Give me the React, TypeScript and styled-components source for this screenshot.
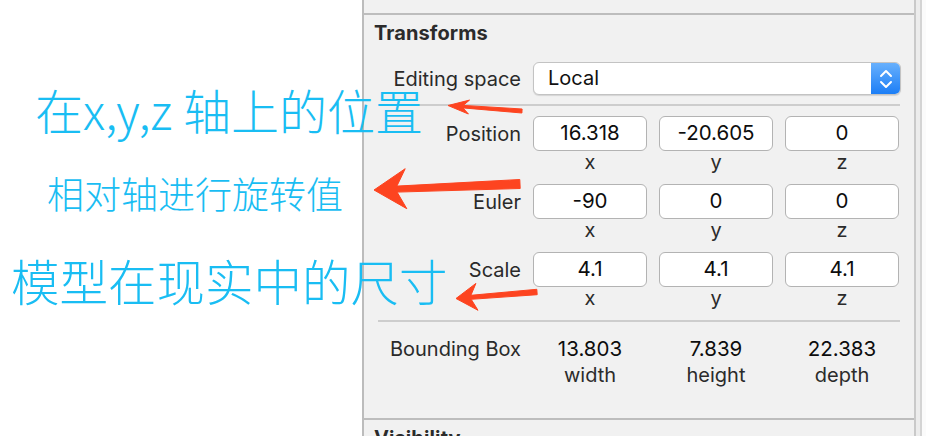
import styled, { createGlobalStyle } from 'styled-components';

const GlobalStyle = createGlobalStyle`
  html, body { margin: 0; padding: 0; background: #ffffff; }
  body { font-family: Inter, "Liberation Sans", sans-serif; }
`;

const ACCENT = '#19bdf3';
const ARROW = '#fd4420';

type Vec = { label: string; values: [string, string, string] };

const vectors: Vec[] = [
  { label: 'Position', values: ['16.318', '-20.605', '0'] },
  { label: 'Euler', values: ['-90', '0', '0'] },
  { label: 'Scale', values: ['4.1', '4.1', '4.1'] },
];

const axes = ['x', 'y', 'z'];

const bounds = [
  { value: '13.803', name: 'width' },
  { value: '7.839', name: 'height' },
  { value: '22.383', name: 'depth' },
];

// tapered, swept-back arrow like a screenshot markup tool draws
function arrowPoints(
  x1: number, y1: number, x2: number, y2: number,
  wt: number, wn: number, hl: number, hw: number,
) {
  const dx = x2 - x1;
  const dy = y2 - y1;
  const len = Math.hypot(dx, dy);
  const ux = dx / len, uy = dy / len;
  const nx = -uy, ny = ux;
  const bx = x2 - ux * hl, by = y2 - uy * hl;
  const kx = x2 - ux * hl * 0.72, ky = y2 - uy * hl * 0.72;
  const pts = [
    [x2, y2],
    [bx + nx * hw / 2, by + ny * hw / 2],
    [kx + nx * wn / 2, ky + ny * wn / 2],
    [x1 + nx * wt / 2, y1 + ny * wt / 2],
    [x1 - nx * wt / 2, y1 - ny * wt / 2],
    [kx - nx * wn / 2, ky - ny * wn / 2],
    [bx - nx * hw / 2, by - ny * hw / 2],
  ];
  return pts.map(p => p.map(v => v.toFixed(1)).join(',')).join(' ');
}

export default function App() {
  return (
    <>
      <GlobalStyle />
      <Page>
        <Gutter />
        <Panel>
          <TopStub />
          <Section>
            <SectionTitle>Transforms</SectionTitle>

            <FieldGrid $top={17}>
              <RowLabel>Editing space</RowLabel>
              <Popup>
                <PopupText>Local</PopupText>
                <Stepper>
                  <svg width="14" height="22" viewBox="0 0 14 22" fill="none">
                    <path d="M2 8 L7 3 L12 8" stroke="#fff" strokeWidth="2" strokeLinecap="round" strokeLinejoin="round" />
                    <path d="M2 14 L7 19 L12 14" stroke="#fff" strokeWidth="2" strokeLinecap="round" strokeLinejoin="round" />
                  </svg>
                </Stepper>
              </Popup>
            </FieldGrid>

            <Separator $top={9} />

            <VectorList>
              {vectors.map(v => (
                <FieldGrid key={v.label} $top={0}>
                  <RowLabel>{v.label}</RowLabel>
                  {v.values.map((val, i) => (
                    <NumBox key={i}>{val}</NumBox>
                  ))}
                  <span />
                  {axes.map(a => (
                    <AxisLabel key={a}>{a}</AxisLabel>
                  ))}
                </FieldGrid>
              ))}
            </VectorList>

            <Separator $top={11} />

            <FieldGrid $top={14}>
              <RowLabel>Bounding Box</RowLabel>
              {bounds.map(b => (
                <BoundValue key={b.name}>{b.value}</BoundValue>
              ))}
              <span />
              {bounds.map(b => (
                <BoundName key={b.name}>{b.name}</BoundName>
              ))}
            </FieldGrid>
          </Section>
          <Section $last>
            <SectionTitle>Visibility</SectionTitle>
          </Section>
        </Panel>
        <RightEdge />

        <Overlay>
          <Note style={{ left: 35, top: 85, fontSize: 48 }}>在x,y,z 轴上的位置</Note>
          <Note style={{ left: 47, top: 175, fontSize: 37 }}>相对轴进行旋转值</Note>
          <Note style={{ left: 11, top: 256, fontSize: 48.5 }}>模型在现实中的尺寸</Note>
          <Arrows width="926" height="436" viewBox="0 0 926 436">
            <polygon points={arrowPoints(522, 111, 448, 105.5, 4, 2.5, 21, 14)} />
            <polygon points={arrowPoints(520, 184, 374, 190, 9, 6, 32, 40)} />
            <polygon points={arrowPoints(537, 292, 456, 298.5, 5.5, 4, 21, 27)} />
          </Arrows>
        </Overlay>
      </Page>
    </>
  );
}

/* ── Styled components ───────────────────────────────────── */

const Page = styled.div`
  position: relative;
  display: flex;
  width: 926px;
  height: 436px;
  overflow: hidden;
  background: #ffffff;
`;

const Gutter = styled.div`
  width: 362px;
  flex-shrink: 0;
`;

const Panel = styled.div`
  width: 554px;
  flex-shrink: 0;
  box-sizing: border-box;
  background: #f1f1f1;
  border-left: 2px solid #bcbcbc;
  border-right: 2px solid #c9c9c9;
  display: flex;
  flex-direction: column;
`;

const RightEdge = styled.div`
  flex: 1;
  background: linear-gradient(to right, #ececec 0 4px, #d4d4d4 4px 6px, #fbfbfb 6px);
`;

const TopStub = styled.div`
  height: 13px;
  flex-shrink: 0;
  border-bottom: 2px solid #bdbdbd;
`;

const Section = styled.section<{ $last?: boolean }>`
  padding: 6px 14px ${({ $last }) => ($last ? '0' : '30px')} 10px;
  border-bottom: ${({ $last }) => ($last ? 'none' : '2px solid #bdbdbd')};
  flex-shrink: 0;
`;

const SectionTitle = styled.h2`
  margin: 0;
  font-size: 20px;
  line-height: 24px;
  font-weight: 700;
  color: #2b2b2b;
  letter-spacing: 0.1px;
`;

const FieldGrid = styled.div<{ $top: number }>`
  display: grid;
  grid-template-columns: 147px repeat(3, 114px);
  column-gap: 12px;
  align-items: center;
  margin-top: ${({ $top }) => $top}px;
`;

const RowLabel = styled.div`
  font-size: 20px;
  line-height: 24px;
  color: #2a2a2a;
  text-align: right;
  white-space: nowrap;
`;

const Popup = styled.div`
  grid-column: 2 / span 3;
  height: 33px;
  margin-right: -2px;
  display: flex;
  align-items: stretch;
  box-sizing: border-box;
  background: #ffffff;
  border: 1px solid #c3c3c3;
  border-radius: 6px;
  box-shadow: 0 1px 1px rgba(0, 0, 0, 0.12);
  overflow: hidden;
`;

const PopupText = styled.span`
  flex: 1;
  padding-left: 14px;
  font-size: 20px;
  line-height: 31px;
  color: #111;
`;

const Stepper = styled.span`
  width: 29px;
  display: flex;
  align-items: center;
  justify-content: center;
  background: linear-gradient(to bottom, #67b0fd, #1c7ef6);
`;

const Separator = styled.hr<{ $top: number }>`
  margin: ${({ $top }) => $top}px 0 0 4px;
  height: 2px;
  border: none;
  background: #cdcdcd;
`;

const VectorList = styled.div`
  display: flex;
  flex-direction: column;
  gap: 11px;
  margin-top: 10px;
`;

const NumBox = styled.div`
  height: 35px;
  box-sizing: border-box;
  background: #ffffff;
  border: 1.5px solid #b3b3b3;
  border-radius: 6px;
  font-size: 20.5px;
  line-height: 32px;
  text-align: center;
  color: #0d0d0d;
`;

const AxisLabel = styled.div`
  font-size: 20px;
  line-height: 22px;
  text-align: center;
  color: #2b2b2b;
`;

const BoundValue = styled.div`
  font-size: 20.5px;
  line-height: 26px;
  text-align: center;
  color: #0d0d0d;
`;

const BoundName = styled.div`
  font-size: 20px;
  line-height: 26px;
  text-align: center;
  color: #2b2b2b;
`;

const Overlay = styled.div`
  position: absolute;
  inset: 0;
  pointer-events: none;
`;

const Note = styled.div`
  position: absolute;
  line-height: 1;
  white-space: nowrap;
  color: ${ACCENT};
  font-family: "Noto Sans CJK SC", "Noto Sans", sans-serif;
  font-weight: 300;
`;

const Arrows = styled.svg`
  position: absolute;
  left: 0;
  top: 0;
  fill: ${ARROW};
  stroke: ${ARROW};
  stroke-width: 1;
  stroke-linejoin: round;
`;
